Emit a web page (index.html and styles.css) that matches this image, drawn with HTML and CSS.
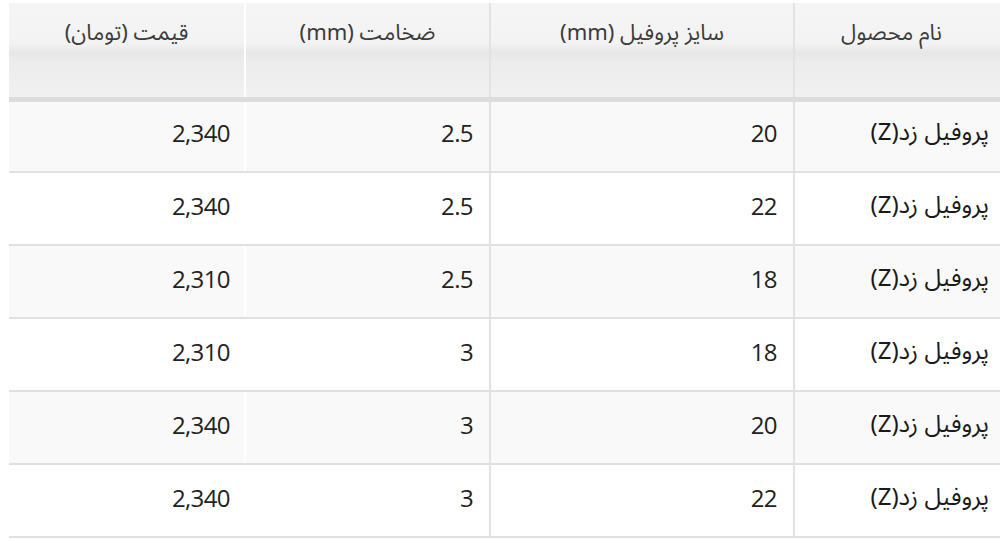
FILE: index.html
```html
<!DOCTYPE html>
<html lang="fa">
<head>
<meta charset="utf-8">
<title>جدول قیمت پروفیل زد</title>
<link rel="stylesheet" href="styles.css">
</head>
<body>
<div class="wrap">
<table class="prices" dir="rtl">
  <thead>
    <tr>
      <th class="c-name">نام محصول</th>
      <th class="c-size">سایز پروفیل (mm)</th>
      <th class="c-thick">ضخامت (mm)</th>
      <th class="c-price">قیمت (تومان)</th>
    </tr>
  </thead>
  <tbody>
    <tr><td class="c-name">پروفیل زد(Z)</td><td class="c-size num">20</td><td class="c-thick num">2.5</td><td class="c-price num">2,340</td></tr>
    <tr><td class="c-name">پروفیل زد(Z)</td><td class="c-size num">22</td><td class="c-thick num">2.5</td><td class="c-price num">2,340</td></tr>
    <tr><td class="c-name">پروفیل زد(Z)</td><td class="c-size num">18</td><td class="c-thick num">2.5</td><td class="c-price num">2,310</td></tr>
    <tr><td class="c-name">پروفیل زد(Z)</td><td class="c-size num">18</td><td class="c-thick num">3</td><td class="c-price num">2,310</td></tr>
    <tr><td class="c-name">پروفیل زد(Z)</td><td class="c-size num">20</td><td class="c-thick num">3</td><td class="c-price num">2,340</td></tr>
    <tr><td class="c-name">پروفیل زد(Z)</td><td class="c-size num">22</td><td class="c-thick num">3</td><td class="c-price num">2,340</td></tr>
  </tbody>
</table>
</div>
</body>
</html>
```
FILE: styles.css
```css
html, body {
  margin: 0;
  padding: 0;
  background: #ffffff;
  overflow: hidden;
}
.wrap {
  padding: 3px 0 0 9px;
}
.prices {
  border-collapse: collapse;
  table-layout: fixed;
  width: 991px;
  font-family: "Noto Sans Arabic", "DejaVu Sans", "Open Sans", sans-serif;
  color: #1e1e1e;
}
.c-name { width: 206px; }
.c-size { width: 304px; }
.c-thick { width: 245px; }
.c-price { width: 236px; }

.prices th {
  height: 96px;
  padding: 13px 0 0 0;
  box-sizing: border-box;
  vertical-align: top;
  text-align: center;
  font-weight: normal;
  font-size: 22px;
  line-height: 34px;
  color: #3c3c3c;
  background: linear-gradient(#f5f5f5 0, #f3f3f3 40px, #e7e7e7 50px, #ececec 58px, #f1f1f1 100%);
  border-bottom: 5px solid #dcdcdc;
}
.prices th.c-name { padding-right: 12px; }
.prices th.c-size,
.prices td.c-size {
  border-left: 2px solid #e2e2e2;
  border-right: 2px solid #e2e2e2;
}
.prices th.c-thick,
.prices td.c-thick {
  border-left: 2px solid #ffffff;
}

.prices td {
  height: 73px;
  box-sizing: border-box;
  padding: 0 16px 6px 0;
  vertical-align: middle;
  text-align: right;
  font-size: 22px;
  line-height: 34px;
  border-bottom: 2px solid #e0e0e0;
}
.prices td.c-name {
  padding-right: 11px;
  font-size: 24px;
  color: #1a1a1a;
}
.prices td.num {
  font-family: "Open Sans", "DejaVu Sans", sans-serif;
  font-size: 24px;
  letter-spacing: -0.6px;
  color: #222222;
}
.prices td.c-price { padding-right: 14px; }
.prices tbody tr:nth-child(odd) td { background: #f9f9f9; }
.prices tbody tr:nth-child(even) td { background: #ffffff; }
```
